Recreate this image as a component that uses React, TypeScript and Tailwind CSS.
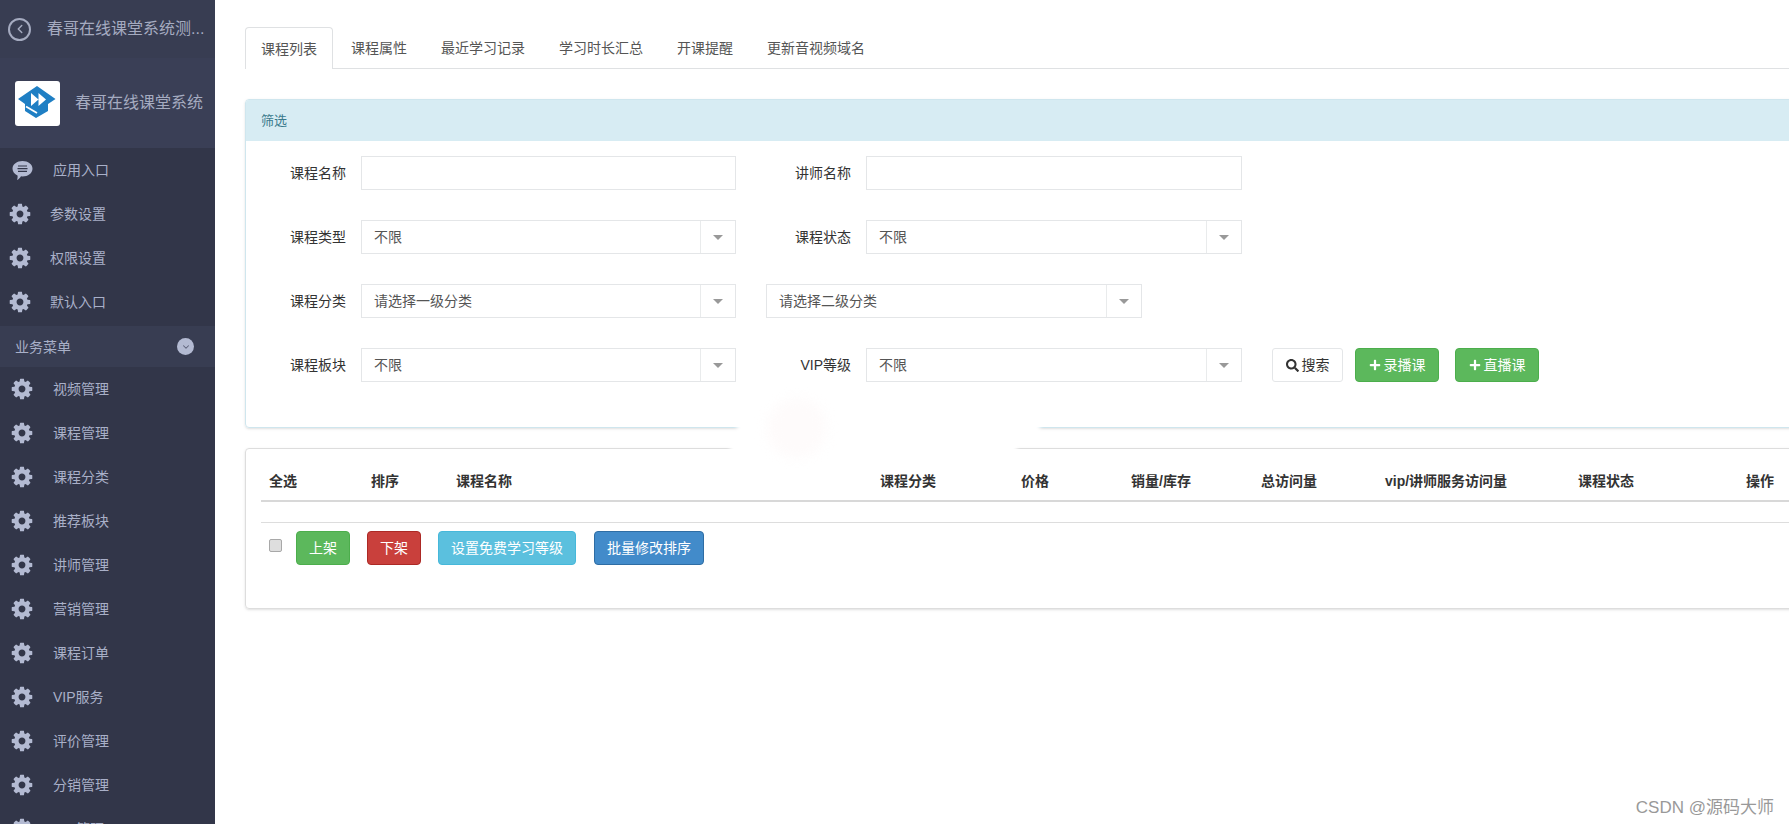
import { ChevronDown, ChevronLeft } from "lucide-react";
import { FaPlus, FaSearch } from "react-icons/fa";

const font = { fontFamily: '"Liberation Sans", "Noto Sans CJK SC", sans-serif' };

const topNav = ["参数设置", "权限设置", "默认入口"];
const bizNav = [
  "视频管理",
  "课程管理",
  "课程分类",
  "推荐板块",
  "讲师管理",
  "营销管理",
  "课程订单",
  "VIP服务",
  "评价管理",
  "分销管理",
  "DIY管理",
];
const tabs = ["课程属性", "最近学习记录", "学习时长汇总", "开课提醒", "更新音视频域名"];
const columns = [
  ["全选", "w-[102px]"],
  ["排序", "w-[85px]"],
  ["课程名称", "w-[424px]"],
  ["课程分类", "w-[141px]"],
  ["价格", "w-[110px]"],
  ["销量/库存", "w-[130px]"],
  ["总访问量", "w-[124px]"],
  ["vip/讲师服务访问量", "w-[193px]"],
  ["课程状态", "w-[168px]"],
  ["操作", "w-[60px]"],
];

function Cog() {
  return (
    <svg viewBox="0 0 1792 1792" className="h-[24px] w-[24px] shrink-0 text-[#b3bad2]" fill="currentColor">
      <path d="M1152 896q0-106-75-181t-181-75-181 75-75 181 75 181 181 75 181-75 75-181zm512-109v222q0 12-8 23t-20 13l-185 28q-19 54-39 91 35 50 107 138 10 12 10 25t-9 23q-27 37-99 108t-94 71q-12 0-26-9l-138-108q-44 23-91 38-16 136-29 186-7 28-36 28h-222q-14 0-24.5-8.5t-11.5-21.5l-28-184q-49-16-90-37l-141 107q-10 9-25 9-14 0-25-11-126-114-165-168-7-10-7-23 0-12 8-23 15-21 51-66.5t54-70.5q-27-50-41-99l-183-27q-13-2-21-12.5t-8-23.5v-222q0-12 8-23t19-13l186-28q14-46 39-92-40-57-107-138-10-12-10-24 0-10 9-23 26-36 98.5-107.5t94.5-71.5q13 0 26 10l138 107q44-23 91-38 16-136 29-186 7-28 36-28h222q14 0 24.5 8.5t11.5 21.5l28 184q49 16 90 37l142-107q9-9 24-9 13 0 25 10 129 119 165 170 7 8 7 22 0 12-8 23-15 21-51 66.5t-54 70.5q26 50 41 98l183 28q13 2 21 12.5t8 23.5z" />
    </svg>
  );
}

function Logo() {
  return (
    <div className="flex h-[45px] w-[45px] shrink-0 items-center justify-center rounded-[3px] bg-white">
      <svg viewBox="0 0 45 45" className="h-[45px] w-[45px]">
        <path d="M22 5 L40.5 18 L33 23 L33 30 L21 37 L10 30 L10 23 L3 18 Z" fill="#1f7fc4" />
        <path d="M16 12 L23.5 18.5 L16 25 Z M23.5 12 L31 18.5 L23.5 25 Z" fill="#fff" />
        <path d="M11 25.5 L22 32" fill="none" stroke="#fff" strokeWidth="1.8" />
      </svg>
    </div>
  );
}

function NavItem({ label, indent }: { label: string; indent: boolean }) {
  return (
    <div className={`flex h-[44px] shrink-0 items-center text-sm text-[#a9b0c8] ${indent ? "pl-[10px]" : "pl-[8px]"}`}>
      <Cog />
      <span className={indent ? "ml-[19px]" : "ml-[18px]"}>{label}</span>
    </div>
  );
}

function Select({ text, width }: { text: string; width: string }) {
  return (
    <div className={`flex h-[34px] items-center border border-[#e4e6e8] text-sm text-[#555] ${width}`}>
      <span className="flex-1 pl-[12px]">{text}</span>
      <span className="flex h-full w-[35px] items-center justify-center border-l border-[#e9ebec]">
        <span className="h-0 w-0 border-x-[5px] border-t-[5px] border-x-transparent border-t-[#999]" />
      </span>
    </div>
  );
}

function Label({ text, width }: { text: string; width: string }) {
  return <label className={`shrink-0 pr-[15px] text-right text-sm text-[#333] ${width}`}>{text}</label>;
}

function ActionButton({ text, tone, width }: { text: string; tone: string; width: string }) {
  return (
    <button className={`flex h-[34px] items-center justify-center rounded-[4px] border text-sm text-white ${tone} ${width}`}>
      {text}
    </button>
  );
}

export default function App() {
  return (
    <div style={font} className="relative flex h-[824px] w-full overflow-hidden bg-white">
      <aside className="flex w-[215px] shrink-0 flex-col overflow-hidden bg-[#323649]">
        <div className="flex h-[58px] shrink-0 items-center bg-[#383d52] pl-[8px] text-base text-[#a5abc0]">
          <span className="flex h-[23px] w-[23px] shrink-0 items-center justify-center rounded-full border-2 border-[#a5abc0]">
            <ChevronLeft className="h-[14px] w-[14px]" strokeWidth={2.5} />
          </span>
          <span className="ml-[16px] whitespace-nowrap">春哥在线课堂系统测...</span>
        </div>
        <div className="flex h-[90px] shrink-0 items-center bg-[#3a3f56] pl-[15px] text-base text-[#a5abc0]">
          <Logo />
          <span className="ml-[15px] whitespace-nowrap">春哥在线课堂系统</span>
        </div>
        <div className="flex h-[44px] shrink-0 items-center pl-[12px] text-sm text-[#a9b0c8]">
          <svg viewBox="0 0 21 21" className="h-[21px] w-[21px] shrink-0">
            <path d="M10.5 1 C16 1 20.5 4.2 20.5 8.7 C20.5 13.2 16 16.4 10.5 16.4 L9 16.3 C8 18 6.5 19.5 5 20 C5.5 18.5 5.8 16.8 5.5 15.4 C2.5 14 0.5 11.6 0.5 8.7 C0.5 4.2 5 1 10.5 1 Z" fill="#b3bad2" />
            <path d="M6 6 H15 M5.5 8.7 H15.5 M6 11.4 H15" stroke="#323649" strokeWidth="1.2" />
          </svg>
          <span className="ml-[20px]">应用入口</span>
        </div>
        {topNav.map((item) => (
          <NavItem key={item} label={item} indent={false} />
        ))}
        <div className="mt-[2px] flex h-[41px] shrink-0 items-center justify-between bg-[#383d52] pl-[15px] pr-[21px] text-sm text-[#a9b0c8]">
          <span>业务菜单</span>
          <span className="flex h-[17px] w-[17px] items-center justify-center rounded-full bg-[#b3bad2]">
            <ChevronDown className="h-[10px] w-[10px] text-[#5b6078]" strokeWidth={2.5} />
          </span>
        </div>
        {bizNav.map((item) => (
          <NavItem key={item} label={item} indent />
        ))}
      </aside>

      <main className="min-w-0 flex-1 overflow-hidden pl-[30px] pt-[27px]">
        <div className="flex h-[42px] w-[1600px] border-b border-[#dfe1e3] text-sm text-[#555]">
          <div className="-mb-px mr-px flex h-[42px] w-[88px] items-center justify-center rounded-t-[4px] border border-b-0 border-[#dfe1e3] bg-white">
            课程列表
          </div>
          {tabs.map((tab) => (
            <div key={tab} className="flex h-full items-center px-[17px]">
              {tab}
            </div>
          ))}
        </div>

        <section className="mt-[30px] w-[1600px] rounded-[4px] border border-[#cfe6ee] shadow-sm">
          <div className="flex h-[41px] items-center rounded-t-[3px] bg-[#d7ecf3] pl-[15px] text-[13px] text-[#3a7a8c]">
            筛选
          </div>
          <div className="flex flex-col gap-[30px] pb-[45px] pt-[15px]">
            <div className="flex items-center">
              <Label text="课程名称" width="w-[115px]" />
              <div className="h-[34px] w-[375px] border border-[#e4e6e8]" />
              <Label text="讲师名称" width="w-[130px]" />
              <div className="h-[34px] w-[376px] border border-[#e4e6e8]" />
            </div>
            <div className="flex items-center">
              <Label text="课程类型" width="w-[115px]" />
              <Select text="不限" width="w-[375px]" />
              <Label text="课程状态" width="w-[130px]" />
              <Select text="不限" width="w-[376px]" />
            </div>
            <div className="flex items-center">
              <Label text="课程分类" width="w-[115px]" />
              <Select text="请选择一级分类" width="w-[375px]" />
              <div className="ml-[30px]">
                <Select text="请选择二级分类" width="w-[376px]" />
              </div>
            </div>
            <div className="flex items-center">
              <Label text="课程板块" width="w-[115px]" />
              <Select text="不限" width="w-[375px]" />
              <Label text="VIP等级" width="w-[130px]" />
              <Select text="不限" width="w-[376px]" />
              <button className="ml-[30px] flex h-[34px] w-[71px] items-center justify-center gap-[3px] rounded-[3px] border border-[#e4e6e8] text-sm text-[#333]">
                <FaSearch className="h-[13px] w-[13px]" />
                搜索
              </button>
              <button className="ml-[12px] flex h-[34px] w-[84px] items-center justify-center gap-[3px] rounded-[4px] border border-[#4cae4c] bg-[#5cb85c] text-sm text-white">
                <FaPlus className="h-[12px] w-[12px]" />
                录播课
              </button>
              <button className="ml-[16px] flex h-[34px] w-[84px] items-center justify-center gap-[3px] rounded-[4px] border border-[#4cae4c] bg-[#5cb85c] text-sm text-white">
                <FaPlus className="h-[12px] w-[12px]" />
                直播课
              </button>
            </div>
          </div>
        </section>

        <section className="mt-[20px] h-[161px] w-[1600px] rounded-[4px] border border-[#dddddd] px-[15px] shadow-sm">
          <div className="flex h-[53px] items-end border-b-2 border-[#d8d8d8] pb-[9px] pl-[8px] text-sm font-bold text-[#333]">
            {columns.map(([name, w]) => (
              <div key={name} className={`shrink-0 whitespace-nowrap ${w}`}>
                {name}
              </div>
            ))}
          </div>
          <div className="h-[21px] border-b border-[#dddddd]" />
          <div className="mt-[8px] flex items-center pl-[8px]">
            <input type="checkbox" className="mb-[6px] h-[13px] w-[13px] appearance-none rounded-[2px] border border-[#a8a8a8] bg-[#dedede]" />
            <ActionButton text="上架" tone="border-[#4cae4c] bg-[#5cb85c]" width="ml-[14px] w-[54px]" />
            <ActionButton text="下架" tone="border-[#ac2925] bg-[#c9403c]" width="ml-[17px] w-[54px]" />
            <ActionButton text="设置免费学习等级" tone="border-[#46b8da] bg-[#5bc0de]" width="ml-[17px] w-[138px]" />
            <ActionButton text="批量修改排序" tone="border-[#2e6da4] bg-[#428bca]" width="ml-[18px] w-[110px]" />
          </div>
        </section>
      </main>

      {/* white patches where the source image had its watermark wiped */}
      <div className="pointer-events-none absolute left-[737px] top-[418px] h-[16px] w-[303px] bg-white blur-[2px]" />
      <div className="pointer-events-none absolute left-[730px] top-[441px] h-[14px] w-[287px] bg-white blur-[2px]" />
      <div className="pointer-events-none absolute left-[767px] top-[398px] h-[60px] w-[60px] rounded-full bg-[#fefbfb] blur-[6px]" />

      <div className="pointer-events-none absolute right-[15px] top-[795px] text-[17px] text-[#999]">CSDN @源码大师</div>
    </div>
  );
}
